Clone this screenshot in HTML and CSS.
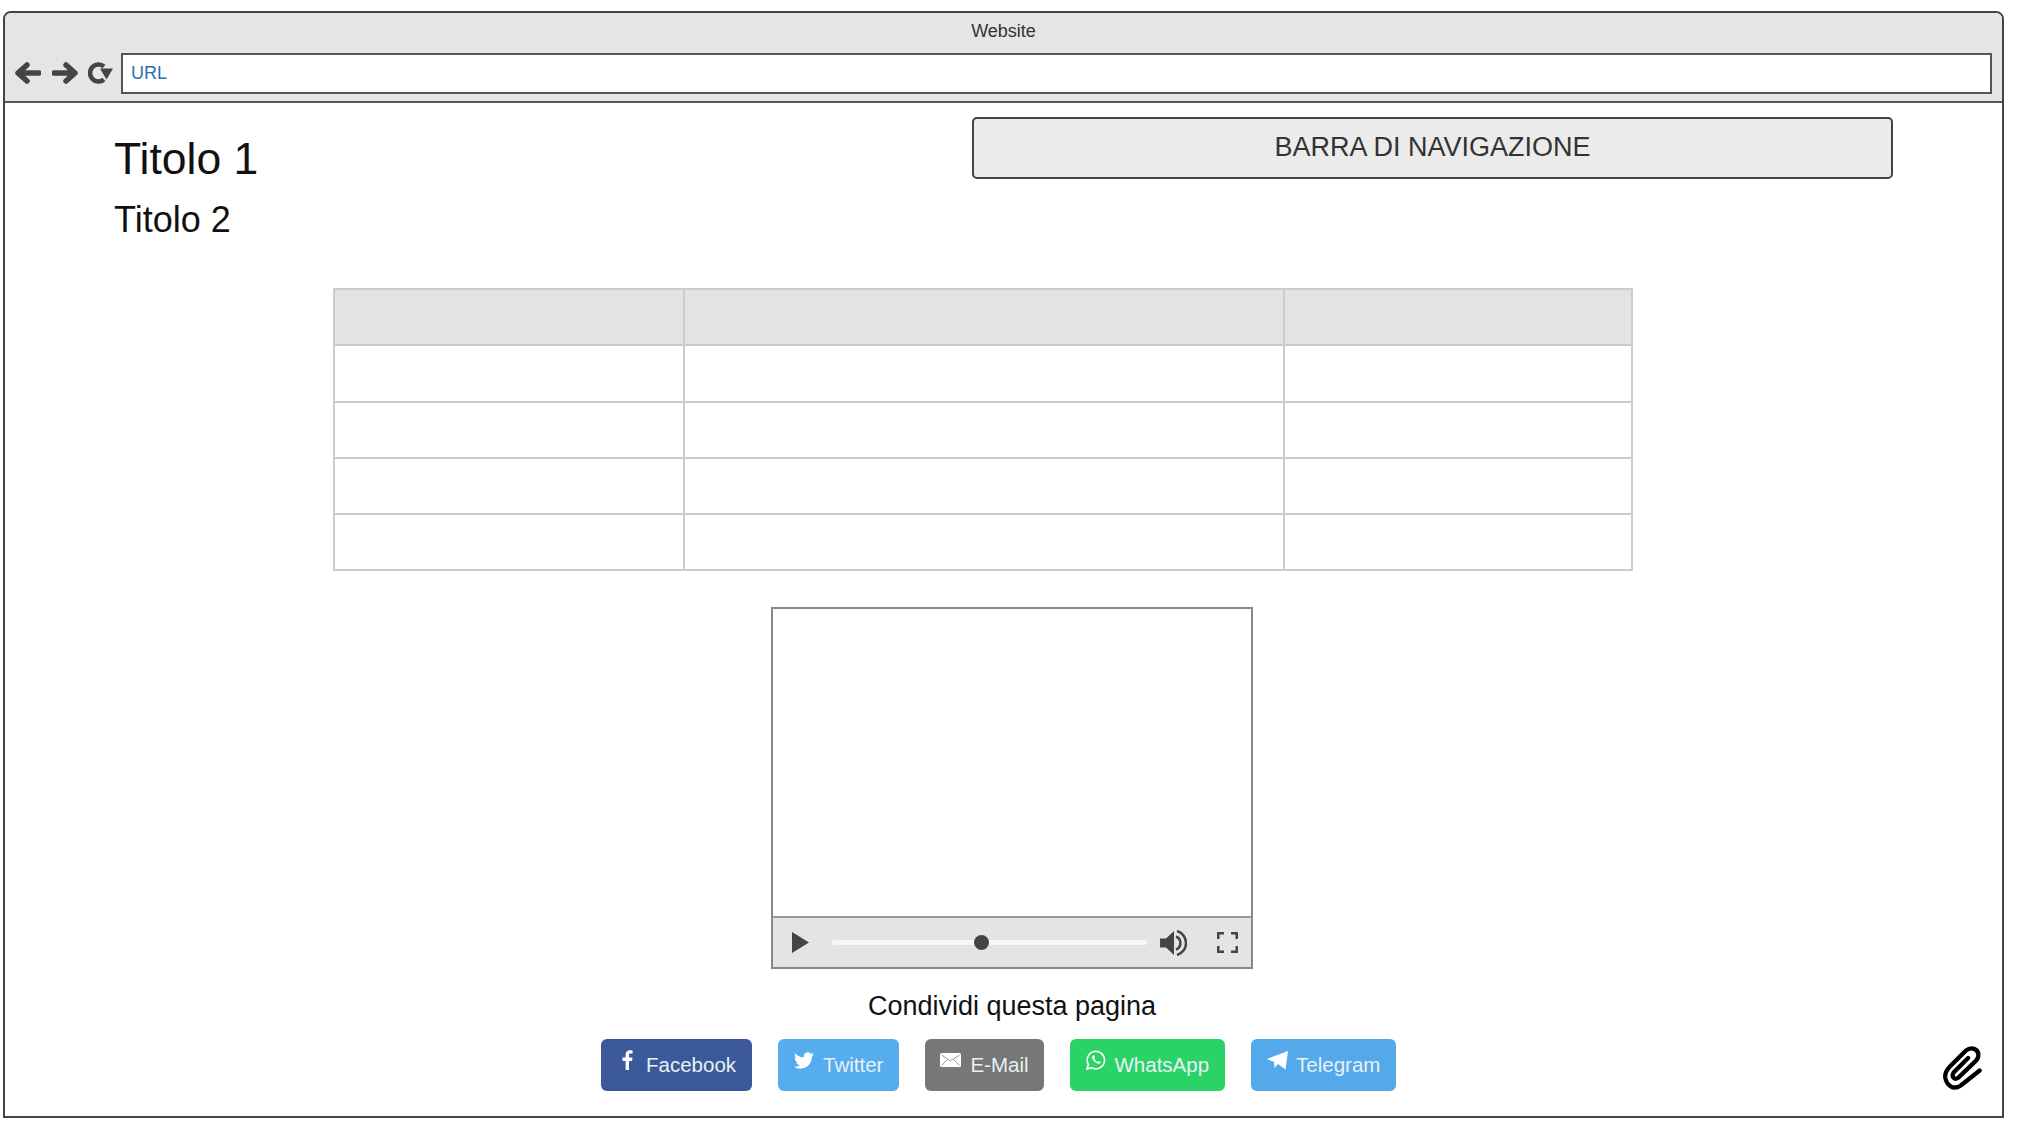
FILE: index.html
```html
<!DOCTYPE html>
<html lang="en">
<head>
    <meta charset="UTF-8">
    <title>Website</title>
    <link rel="stylesheet" href="styles.css">
</head>
<body>
    <div class="window">
        <div class="browser-bar">
            <div class="browser-title">Website</div>
            <div class="browser-tools">
                <svg class="nav-icon" viewBox="0 0 26 22"><path d="M12 3L3 11L12 19M4 11H24"/></svg>
                <svg class="nav-icon forward" viewBox="0 0 26 22"><path d="M14 3L23 11L14 19M22 11H2"/></svg>
                <svg class="reload-icon" viewBox="0 0 25 22">
                    <path class="reload-arc" d="M16 4.500A8.500 8.500 0 1 0 16 17.500"/>
                    <path class="reload-head" d="M12 6.500H25L18.500 17.500z"/>
                </svg>
                <div class="url-box">URL</div>
            </div>
        </div>

        <div class="header">
            <div class="titles">
                <h1>Titolo 1</h1>
                <h2>Titolo 2</h2>
            </div>
            <div class="navbar">BARRA DI NAVIGAZIONE</div>
        </div>

        <table class="data-table">
            <tr class="head-row"><td class="col-a"></td><td class="col-b"></td><td class="col-c"></td></tr>
            <tr><td></td><td></td><td></td></tr>
            <tr><td></td><td></td><td></td></tr>
            <tr><td></td><td></td><td></td></tr>
            <tr><td></td><td></td><td></td></tr>
        </table>

        <div class="video">
            <div class="video-screen"></div>
            <div class="video-controls">
                <svg class="play-icon" viewBox="0 0 17 21"><polygon points="0,0 17,10.500 0,21"/></svg>
                <div class="track"><span class="knob"></span></div>
                <svg class="volume-icon" viewBox="0 0 27 26">
                    <polygon points="0,8.500 6,8.500 14,1 14,25 6,17.500 0,17.500"/>
                    <path d="M16 6.500A7 7 0 0 1 16 19.500M17 1A12.500 12.500 0 0 1 17 25"/>
                </svg>
                <svg class="full-icon" viewBox="0 0 21 21">
                    <path d="M1 7V1H7M14 1H20V7M20 14V20H14M7 20H1V14"/>
                </svg>
            </div>
        </div>

        <div class="share-title">Condividi questa pagina</div>

        <div class="share-row">
            <a class="share facebook">
                <svg class="fb-icon" viewBox="0 0 11 20"><path d="M7 20V11h3l.5-3.500H7V5.300C7 4.300 7.300 3.600 8.800 3.600h1.800V.4C10.200.3 9.200.2 8 .2 5.400.2 3.600 1.800 3.600 4.700v2.800H.5V11h3.100v9z"/></svg>
                Facebook
            </a>
            <a class="share twitter">
                <svg class="tw-icon" viewBox="0 0 24 20"><path d="M23.953 2.570a10 10 0 01-2.825.775 4.958 4.958 0 002.163-2.723c-.951.555-2.005.959-3.127 1.184a4.920 4.920 0 00-8.384 4.482C7.690 6.095 4.067 4.130 1.640 1.162a4.822 4.822 0 00-.666 2.475c0 1.710.870 3.213 2.188 4.096a4.904 4.904 0 01-2.228-.616v.06a4.923 4.923 0 003.946 4.827 4.996 4.996 0 01-2.212.085 4.936 4.936 0 004.604 3.417 9.867 9.867 0 01-6.102 2.105c-.39 0-.779-.023-1.170-.067a13.995 13.995 0 007.557 2.209c9.053 0 13.998-7.496 13.998-13.985 0-.21 0-.42-.015-.63A9.935 9.935 0 0024 2.590z"/></svg>
                Twitter
            </a>
            <a class="share email">
                <svg class="mail-icon" viewBox="0 0 21 14">
                    <rect width="21" height="14" rx="1.500"/>
                    <path d="M1.500 2L10.500 8L19.500 2M1.500 12.500L7.500 6.500M19.500 12.500L13.500 6.500"/>
                </svg>
                E-Mail
            </a>
            <a class="share whatsapp">
                <svg class="wa-icon" viewBox="0 0 20 20">
                    <path class="wa-ring" d="M1 19L2.400 14.500A8.700 8.700 0 1 1 5.700 17.700z"/>
                    <path class="wa-phone" d="M7 5.200C5.700 6 5.700 7.700 7 9.700C8.500 12 11 13.800 12.800 13.700C14 13.600 14.800 12.800 14.700 12L12.700 11L11.800 12C10.500 11.500 9 10 8.200 8.500L9 7.500L8.200 5.200z"/>
                </svg>
                WhatsApp
            </a>
            <a class="share telegram">
                <svg class="tg-icon" viewBox="0 0 21 19"><polygon points="0,8 21,0 18.500,18.500 11,13 7.500,17 7,11"/></svg>
                Telegram
            </a>
        </div>

        <svg class="clip-icon" viewBox="130 107 133 148">
            <path d="M250 190L192 236C170 250 150 235 146 212C144 198 150 188 160 178L208 130C225 117 245 125 246 142C247 152 240 160 232 167L185 212C172 220 163 208 172 195L215 152"/>
        </svg>
    </div>
</body>
</html>
```

FILE: styles.css
```css
body {
    margin: 0;
    background-color: #fff;
    font-family: "Liberation Sans", Arial, sans-serif;
}

.window {
    position: relative;
    box-sizing: border-box;
    height: 1107px;
    margin: 11px 13px 9px 3px;
    border: 2px solid #444;
    border-radius: 8px 8px 0 0;
}

/* browser chrome */
.browser-bar {
    height: 90px;
    box-sizing: border-box;
    background-color: #e5e5e5;
    border-bottom: 2px solid #555;
    border-radius: 6px 6px 0 0;
}
.browser-title {
    height: 38px;
    line-height: 36px;
    text-align: center;
    font-size: 18px;
    color: #333;
}
.browser-tools {
    display: flex;
    align-items: center;
    padding: 2px 10px 0 10px;
}
.nav-icon {
    width: 26px;
    height: 22px;
    margin: 0 10px 2px 0;
    fill: none;
    stroke: #444;
    stroke-width: 5.500;
    stroke-linecap: round;
    stroke-linejoin: round;
}
.forward {
    margin-left: 1px;
}
.reload-icon {
    width: 25px;
    height: 22px;
    margin: 0 8px 2px 0;
}
.reload-arc {
    fill: none;
    stroke: #444;
    stroke-width: 4.500;
}
.reload-head {
    fill: #444;
}
.url-box {
    flex: 1;
    box-sizing: border-box;
    height: 41px;
    line-height: 37px;
    padding-left: 8px;
    background-color: #fff;
    border: 2px solid #555;
    font-size: 18px;
    color: #2a70b3;
}

/* page header */
.header {
    display: flex;
    justify-content: space-between;
    align-items: flex-start;
    padding: 14px 109px 0 109px;
}
h1 {
    margin: 17px 0 0 0;
    font-size: 44.500px;
    font-weight: normal;
    line-height: 50px;
    color: #111;
}
h2 {
    margin: 16px 0 0 0;
    font-size: 36px;
    font-weight: normal;
    line-height: 40px;
    color: #111;
}
.navbar {
    box-sizing: border-box;
    width: 921px;
    height: 62px;
    line-height: 56px;
    text-align: center;
    background-color: #ebebeb;
    border: 2px solid #444;
    border-radius: 5px;
    font-size: 27px;
    color: #333;
}

/* table */
.data-table {
    width: 1300px;
    margin: 48px 0 0 328px;
    border-collapse: collapse;
    table-layout: fixed;
}
.data-table td {
    height: 54.300px;
    padding: 0;
    border: 2px solid #ccc;
}
.head-row td {
    background-color: #e3e3e3;
}
.col-a {
    width: 348px;
}
.col-b {
    width: 598px;
}

/* video player */
.video {
    display: flex;
    flex-direction: column;
    box-sizing: border-box;
    width: 482px;
    height: 362px;
    margin: 36px 0 0 766px;
    border: 2px solid #888;
}
.video-screen {
    flex: 1;
}
.video-controls {
    display: flex;
    align-items: center;
    box-sizing: border-box;
    height: 51px;
    padding-left: 19px;
    background-color: #e4e4e4;
    border-top: 2px solid #999;
}
.play-icon {
    width: 17px;
    height: 21px;
    margin-right: 23px;
    fill: #444;
}
.track {
    position: relative;
    width: 315px;
    height: 5px;
    margin-right: 13px;
    background-color: #f7f7f7;
    border-radius: 3px;
}
.knob {
    position: absolute;
    left: 142px;
    top: -5px;
    width: 15px;
    height: 15px;
    background-color: #444;
    border-radius: 50%;
}
.volume-icon {
    width: 27px;
    height: 26px;
    margin-right: 30px;
    fill: #444;
}
.volume-icon path {
    fill: none;
    stroke: #444;
    stroke-width: 2.500;
}
.full-icon {
    width: 21px;
    height: 21px;
    fill: none;
    stroke: #444;
    stroke-width: 3;
}

/* share buttons */
.share-title {
    width: 482px;
    margin: 21px 0 0 766px;
    text-align: center;
    font-size: 27px;
    line-height: 32px;
    color: #111;
}
.share-row {
    display: flex;
    gap: 26px;
    margin: 17px 0 0 596px;
}
.share {
    display: flex;
    align-items: center;
    box-sizing: border-box;
    height: 52px;
    padding: 0 16px;
    border-radius: 6px;
    font-size: 20.500px;
    color: #e9f0f6;
}
.share svg {
    margin-bottom: 10px;
    fill: #fff;
}
.facebook {
    background-color: #3b5998;
    padding-left: 21px;
}
.twitter {
    background-color: #55acee;
}
.email {
    background-color: #777;
    padding: 0 15px;
}
.whatsapp {
    background-color: #2bd366;
}
.telegram {
    background-color: #54a9eb;
}
.fb-icon {
    width: 11px;
    height: 20px;
    margin-right: 13px;
}
.tw-icon {
    width: 20px;
    height: 17px;
    margin-right: 9px;
}
.mail-icon {
    width: 21px;
    height: 14px;
    margin-right: 9px;
}
.mail-icon path {
    fill: none;
    stroke: #999;
    stroke-width: 1;
}
.wa-icon {
    width: 20px;
    height: 20px;
    margin-right: 9px;
}
.share .wa-ring {
    fill: none;
    stroke: #fff;
    stroke-width: 1.600;
}
.tg-icon {
    width: 21px;
    height: 19px;
    margin-right: 8px;
}

/* paper clip in the corner */
.clip-icon {
    position: absolute;
    right: 18px;
    bottom: 24px;
    width: 44px;
    height: 49px;
    fill: none;
    stroke: #000;
    stroke-width: 13;
    stroke-linecap: round;
}
```
